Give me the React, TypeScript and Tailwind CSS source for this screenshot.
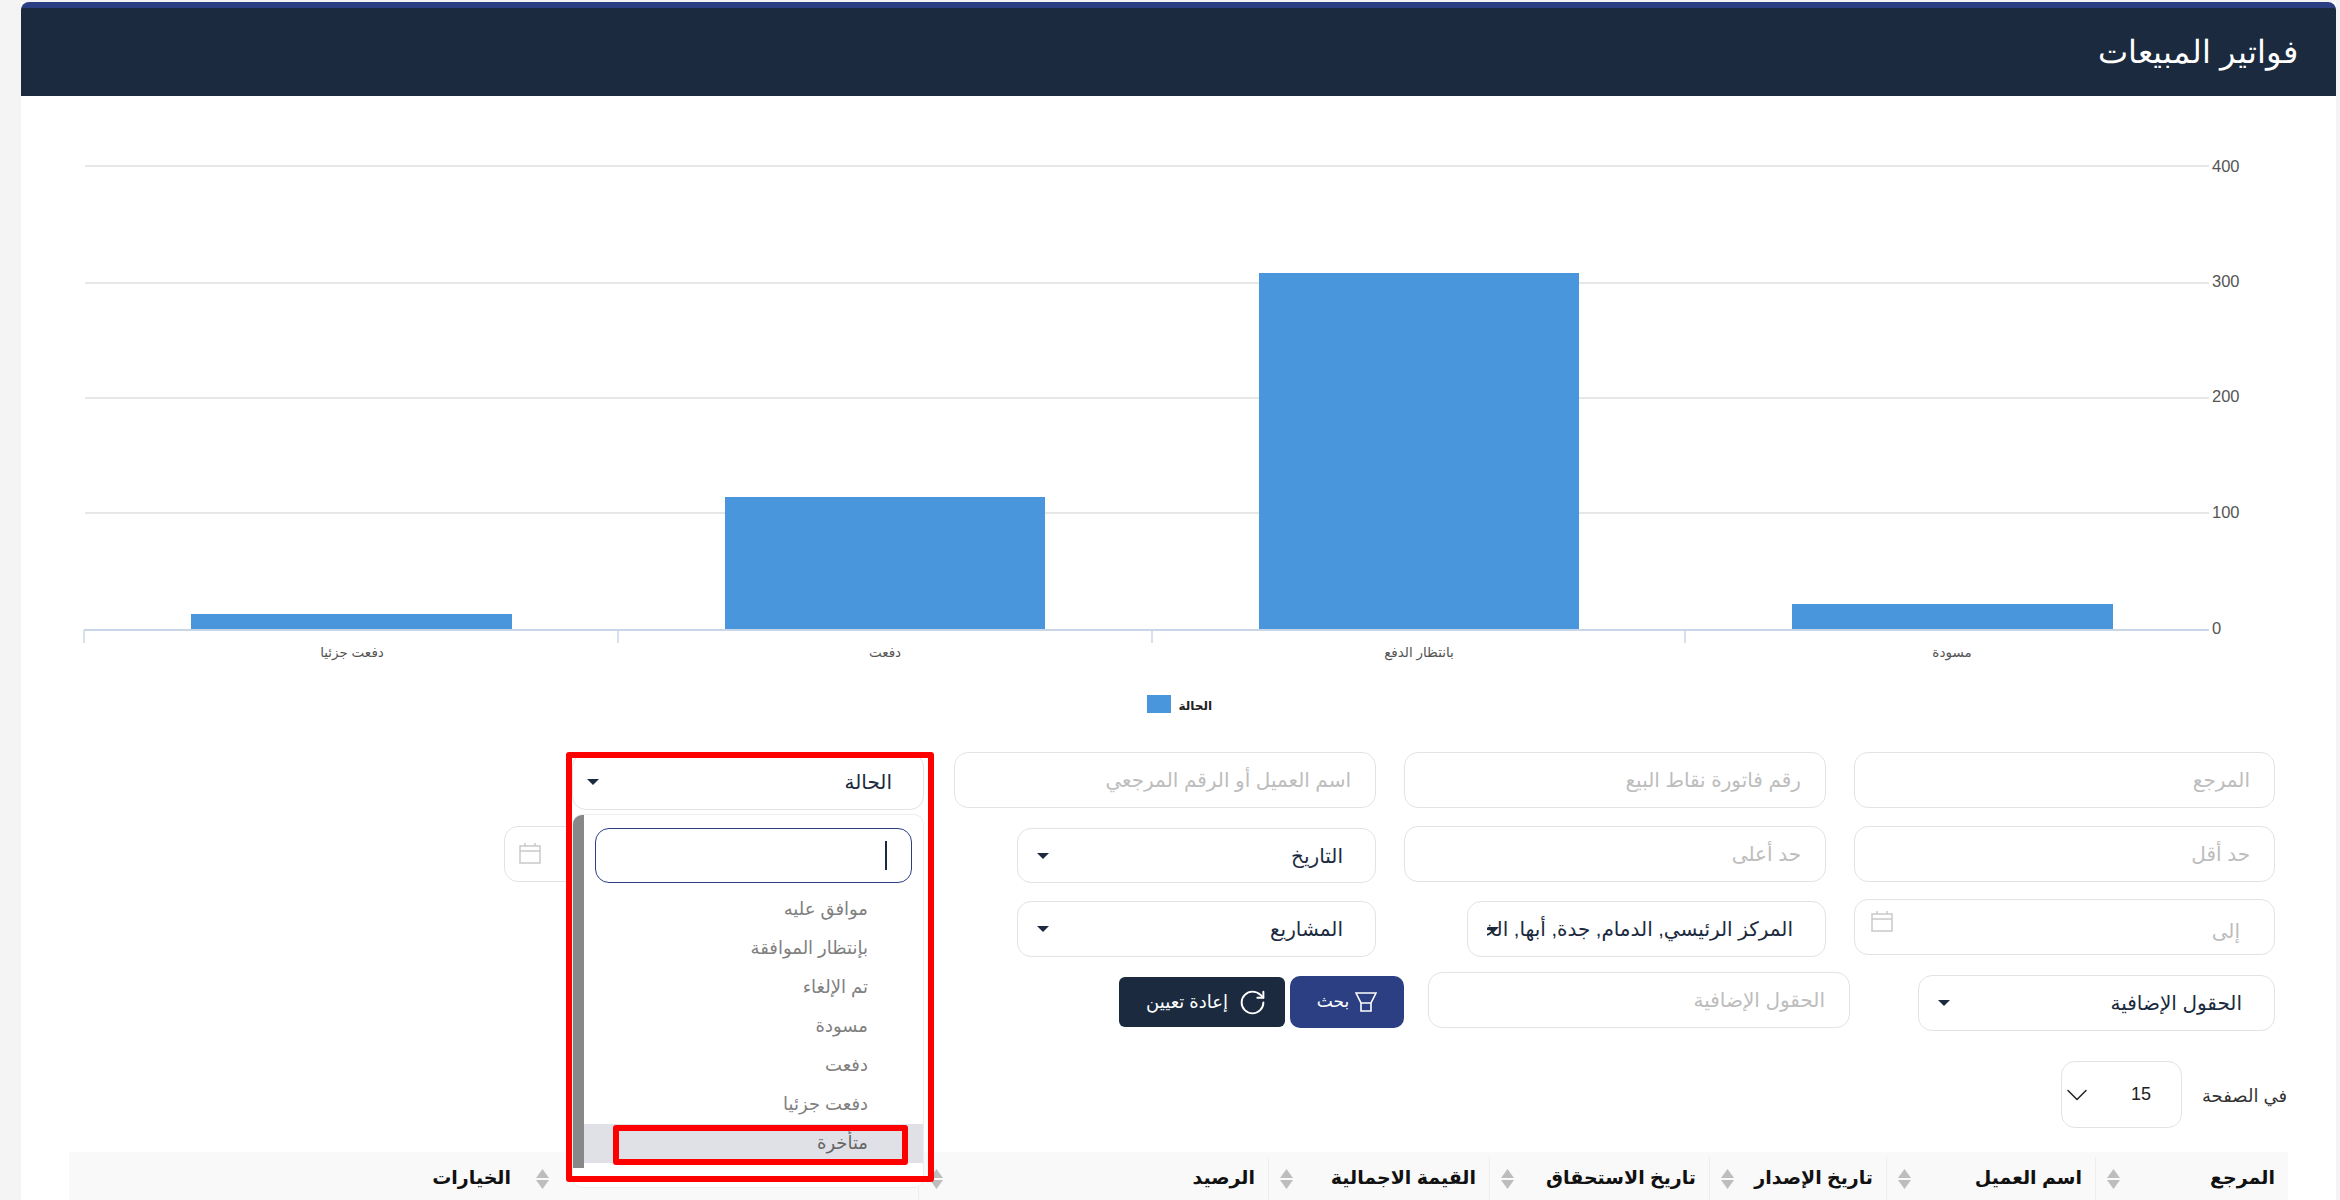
import React from 'react';
import { ChevronDown, RotateCw } from 'lucide-react';

const bars = [
  { label: 'دفعت جزئيا', x: 191, w: 321, top: 614, cx: 352 },
  { label: 'دفعت', x: 725, w: 320, top: 497, cx: 885 },
  { label: 'بانتظار الدفع', x: 1259, w: 320, top: 273, cx: 1419 },
  { label: 'مسودة', x: 1792, w: 321, top: 604, cx: 1952 },
];

const grid = [
  { y: 166, label: '400', ty: 172 },
  { y: 283, label: '300', ty: 287 },
  { y: 398, label: '200', ty: 402 },
  { y: 513, label: '100', ty: 518 },
];

const statuses = ['موافق عليه', 'بإنتظار الموافقة', 'تم الإلغاء', 'مسودة', 'دفعت', 'دفعت جزئيا'];

const columns = [
  { label: 'المرجع', w: 'w-[193px]' },
  { label: 'اسم العميل', w: 'w-[209px]' },
  { label: 'تاريخ الإصدار', w: 'w-[177px]' },
  { label: 'تاريخ الاستحقاق', w: 'w-[220px]' },
  { label: 'القيمة الاجمالية', w: 'w-[221px]' },
  { label: 'الرصيد', w: 'w-[350px]' },
];

const SortIcon = () => (
  <svg width="13" height="20" viewBox="0 0 13 20" className="shrink-0">
    <path d="M6.5 0L13 9H0z" fill="#bdbdbd" />
    <path d="M0 11h13l-6.5 9z" fill="#bdbdbd" />
  </svg>
);

const CalendarIcon = () => (
  <svg width="22" height="21" viewBox="0 0 22 21" fill="none" stroke="#c9c9c9" strokeWidth="1.5" className="shrink-0">
    <rect x="1" y="3" width="20" height="17" />
    <path d="M1 8h20M6 0v3M16 0v3" />
  </svg>
);

const Caret = () => (
  <svg width="12" height="6" viewBox="0 0 12 6" className="shrink-0">
    <path d="M0 0h12L6 6z" fill="#1b2a3e" />
  </svg>
);

// plain text field, placeholder look
const Field = ({ text, className = '' }: { text: string; className?: string }) => (
  <div className={`h-[56px] flex items-center pr-[24px] pl-4 border border-[#e3e3e3] rounded-[14px] bg-white text-[#bdbdbd] text-[20px] shrink-0 ${className}`}>
    {text}
  </div>
);

const Select = ({ text, className = '' }: { text: string; className?: string }) => (
  <div className={`h-[56px] flex items-center justify-between pr-[32px] pl-[19px] border border-[#e3e3e3] rounded-[14px] bg-white text-[#1b2a3e] text-[20px] shrink-0 ${className}`}>
    <span>{text}</span>
    <Caret />
  </div>
);

const StatusDropdown = () => (
  <div className="relative w-[352px] h-[57px] mt-px mr-[2px] shrink-0">
    <Select text="الحالة" className="w-[352px] !h-[57px] !pl-[14px] !pr-[31px]" />
    <div className="absolute z-10 top-[61px] left-0 w-[352px] h-[374px] bg-white border border-[#eeeeee] rounded-[10px] flex overflow-hidden">
      <div className="flex-1 min-w-0">
        <div className="mt-[13px] mx-[11px] h-[55px] border border-[#2b3f82] rounded-[14px] flex items-center pr-[24px]">
          <div className="w-[2px] h-[29px] bg-[#1b2a3e]" />
        </div>
        <div className="mt-[7px]">
          {statuses.map((s) => (
            <div key={s} className="h-[39px] flex items-center pr-[55px] text-[#808080] text-[18px]">
              {s}
            </div>
          ))}
          <div className="relative h-[39px] flex items-center pr-[55px] text-[#666] text-[18px] bg-[#e0e1e6]">
            متأخرة
            <div className="absolute top-px right-[15px] w-[295px] h-[40px] border-[6px] border-[#ff0000] rounded-[3px]" />
          </div>
        </div>
      </div>
      <div className="w-[11px] h-[353px] bg-[#888888] shrink-0" />
    </div>
    <div className="absolute z-20 -top-px -left-[6px] w-[368px] h-[430px] border-[6px] border-[#ff0000] rounded-[3px] pointer-events-none" />
  </div>
);

const App: React.FC = () => {
  return (
    <div
      dir="rtl"
      className="h-[1200px] overflow-hidden bg-[#f4f4f4] pt-[2px] pr-[4px] pl-[21px]"
      style={{ fontFamily: '"Liberation Sans", "DejaVu Sans", sans-serif' }}
    >
      <div className="bg-white h-[1198px]">
        {/* Header */}
        <div className="rounded-t-[8px] overflow-hidden">
          <div className="h-[6px] bg-[#2b3f82]" />
          <div className="h-[88px] bg-[#1b2a3e] flex items-center pr-[38px] text-white text-[32px] font-light">
            فواتير المبيعات
          </div>
        </div>

        {/* Chart */}
        <svg width="2315" height="656" viewBox="21 96 2315 656" className="block">
          {grid.map((g) => (
            <g key={g.label}>
              <line x1="85" x2="2209" y1={g.y} y2={g.y} stroke="#dfdfdf" strokeWidth="1.5" />
              <text x="2212" y={g.ty} fontSize="16.5" fill="#555" direction="ltr" textAnchor="start">{g.label}</text>
            </g>
          ))}
          <text x="2212" y="634" fontSize="16.5" fill="#555" direction="ltr" textAnchor="start">0</text>
          {bars.map((b) => (
            <g key={b.label}>
              <rect x={b.x} y={b.top} width={b.w} height={629 - b.top} fill="#4a96dc" />
              <text x={b.cx} y="657" fontSize="13.5" fill="#555" textAnchor="middle" direction="rtl">{b.label}</text>
            </g>
          ))}
          <line x1="84" x2="2209" y1="630" y2="630" stroke="#c8d6e8" strokeWidth="2" />
          {[84, 618, 1152, 1685].map((x) => (
            <line key={x} x1={x} x2={x} y1="630" y2="643" stroke="#c8d6e8" strokeWidth="1.5" />
          ))}
          <rect x="1147" y="695" width="24" height="18" fill="#4a96dc" />
          <text x="1212" y="710" fontSize="12" fontWeight="700" fill="#222" textAnchor="start" direction="rtl">الحالة</text>
        </svg>

        {/* Filters */}
        <div className="flex flex-col mr-[61px]">
          <div className="flex items-start gap-[28px] h-[56px]">
            <Field text="المرجع" className="w-[421px]" />
            <Field text="رقم فاتورة نقاط البيع" className="w-[422px]" />
            <Field text="اسم العميل أو الرقم المرجعي" className="w-[422px]" />
            <StatusDropdown />
          </div>

          <div className="flex items-start gap-[28px] mt-[18px] h-[57px]">
            <Field text="حد أقل" className="w-[421px]" />
            <Field text="حد أعلى" className="w-[422px]" />
            <Select text="التاريخ" className="w-[359px] mt-[2px] !h-[55px]" />
            <div className="w-[420px] h-[56px] mr-[65px] flex items-center justify-end pl-[14px] pb-[2px] border border-[#e3e3e3] rounded-[14px] shrink-0">
              <CalendarIcon />
            </div>
          </div>

          <div className="flex items-start gap-[28px] mt-[16px] h-[58px]">
            <div className="w-[421px] h-[56px] flex items-center justify-between pr-[34px] pl-[16px] border border-[#e3e3e3] rounded-[14px] text-[#bdbdbd] text-[20px] shrink-0">
              <span className="mt-[8px]">إلى</span>
              <span className="-mt-[12px]"><CalendarIcon /></span>
            </div>
            <div className="relative w-[359px] h-[56px] mt-[2px] flex items-center pr-[32px] border border-[#e3e3e3] rounded-[14px] text-[#1b2a3e] text-[20px] shrink-0 overflow-hidden">
              <span className="block w-[306px] overflow-hidden whitespace-nowrap">المركز الرئيسي, الدمام, جدة, أبها, الخبر</span>
              <span className="absolute left-[19px] top-[25px]"><Caret /></span>
            </div>
            <Select text="المشاريع" className="w-[359px] mt-[2px] mr-[63px]" />
          </div>

          <div className="flex items-start mt-[15px] h-[59px]">
            <Select text="الحقول الإضافية" className="w-[357px] mt-[3px]" />
            <Field text="الحقول الإضافية" className="w-[422px] mr-[68px]" />
            <button className="w-[114px] h-[52px] mt-[4px] mr-[24px] rounded-[10px] bg-[#2b3f82] text-white text-[17px] flex items-center justify-center gap-[6px] shrink-0">
              <svg width="22" height="20" viewBox="0 0 22 20" fill="none" stroke="#fff" strokeWidth="1.6" className="shrink-0">
                <path d="M1 1h20l-5 10v8H6v-8zM6 11h10" />
              </svg>
              بحث
            </button>
            <button className="w-[166px] h-[50px] mt-[5px] mr-[5px] pr-[18px] rounded-[6px] bg-[#1b2a3e] text-white text-[18px] flex items-center justify-start gap-[10px] shrink-0">
              <RotateCw size={29} strokeWidth={1.6} />
              إعادة تعيين
            </button>
          </div>

          {/* Per page */}
          <div className="flex items-center mt-[30px] h-[67px] -mr-[12px]">
            <span className="w-[105px] text-[18px] text-[#333] shrink-0 pt-1">في الصفحة</span>
            <div className="w-[121px] h-[67px] flex items-center justify-between pr-[30px] border border-[#e3e3e3] rounded-[14px] text-[18px] text-[#222]">
              <span>15</span>
              <ChevronDown size={36} strokeWidth={1} className="-ml-[3px]" />
            </div>
          </div>

          {/* Table header */}
          <div className="flex mt-[24px] h-[48px] w-[2219px] -mr-[13px] bg-[#f9f9f9] text-[#111] text-[19px] font-bold">
            {columns.map((c) => (
              <div key={c.label} className={`${c.w} mt-[5px] flex items-center justify-between pr-[13px] pl-[11px] border-l border-[#eeeeee] shrink-0 whitespace-nowrap`}>
                <span>{c.label}</span>
                <SortIcon />
              </div>
            ))}
            <div className="flex-1 mt-[5px] flex items-center gap-[25px] pr-[369px]">
              <SortIcon />
              <span>الخيارات</span>
            </div>
          </div>
        </div>
      </div>
    </div>
  );
};

export default App;
